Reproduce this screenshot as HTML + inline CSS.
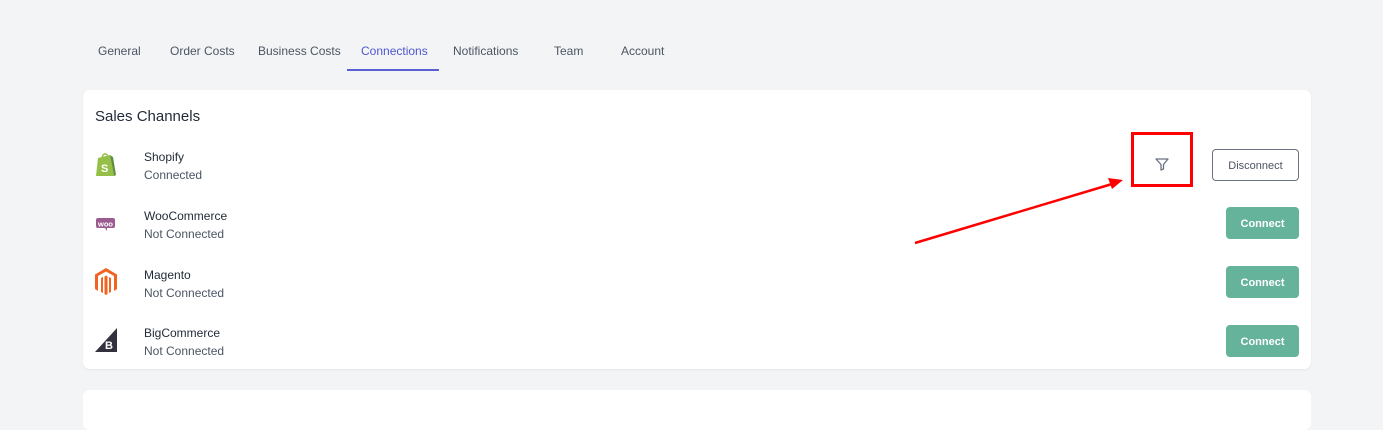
<!DOCTYPE html>
<html><head><style>
body{margin:0;width:1383px;height:407px;background:#f3f4f6;font-family:"Liberation Sans",sans-serif;position:relative;overflow:hidden}
.tab{position:absolute;top:44px;font-size:12px;color:#4b5563}
.card{position:absolute;left:83px;top:90px;width:1228px;height:279px;background:#fff;border-radius:7px;box-shadow:0 1px 2px rgba(0,0,0,.06)}
.card2{position:absolute;left:83px;top:390px;width:1228px;height:40px;background:#fff;border-radius:7px}
.name{position:absolute;left:144px;font-size:12px;color:#1f2937}
.st{position:absolute;left:144px;font-size:12px;color:#4b5563}
.btn{position:absolute;left:1226px;width:73px;height:32px;border-radius:4px;background:#65b39b;color:#fff;font-size:11px;font-weight:bold;text-align:center;line-height:35px}
</style></head><body>
<div class="tab" style="left:98px">General</div>
<div class="tab" style="left:170px">Order Costs</div>
<div class="tab" style="left:258px">Business Costs</div>
<div class="tab" style="left:361px;color:#4f56d0">Connections</div>
<div class="tab" style="left:453px">Notifications</div>
<div class="tab" style="left:554px">Team</div>
<div class="tab" style="left:621px">Account</div>
<div style="position:absolute;left:347px;top:69px;width:92px;height:2px;background:#5a5fd6"></div>
<div class="card"></div>
<div class="card2"></div>
<div style="position:absolute;left:95px;top:108px;font-size:15px;color:#1f2937">Sales Channels</div>

<svg style="position:absolute;left:95px;top:152px" width="22" height="26" viewBox="0 0 22 26"><path d="M3 6 L15 3 L19 24 L1 24 Z" fill="#95bf47"/><path d="M15 3 L19 24 L21 23 L18 5Z" fill="#5e8e3e"/><path d="M7 6 Q8 1 11 2 Q13 3 13 6" fill="none" stroke="#95bf47" stroke-width="1.5"/><text x="6" y="20" font-size="11" font-weight="bold" fill="#fff" font-family="Liberation Sans">S</text></svg>
<div class="name" style="top:150px">Shopify</div><div class="st" style="top:168px">Connected</div>

<svg style="position:absolute;left:96px;top:217px" width="20" height="14"><rect x="0" y="1" width="19" height="10" rx="2" fill="#9b5c8f"/><path d="M9 11 L11 14 L11 11Z" fill="#9b5c8f"/><text x="2" y="9.5" font-size="7.5" font-weight="bold" fill="#fff" font-family="Liberation Sans">woo</text></svg>
<div class="name" style="top:209px">WooCommerce</div><div class="st" style="top:227px">Not Connected</div>

<svg style="position:absolute;left:95px;top:268px" width="22" height="28" viewBox="0 0 22 28"><path d="M11 0 L22 6.5 V21 L19 23 V8 L11 3.5 L3 8 V23 L0 21 V6.5Z" fill="#f26322"/><path d="M9.5 8.5 L11 7.5 L12.5 8.5 V26 L11 27 L9.5 26Z" fill="#f26322"/><path d="M6 10 L8 9 V25 L6 24Z M14 9 L16 10 V24 L14 25Z" fill="#f26322"/></svg>
<div class="name" style="top:268px">Magento</div><div class="st" style="top:286px">Not Connected</div>

<svg style="position:absolute;left:95px;top:328px" width="22" height="24"><path d="M22 0 V24 H0Z" fill="#34313f"/><text x="10" y="21" font-size="11" font-weight="bold" fill="#fff" font-family="Liberation Sans">B</text></svg>
<div class="name" style="top:326px">BigCommerce</div><div class="st" style="top:344px">Not Connected</div>

<svg style="position:absolute;left:1154px;top:156px" width="16" height="16" viewBox="0 0 16 16"><path d="M2 3 H14 L9.5 8.5 V13 L7 14 V8.5Z" fill="none" stroke="#6b7280" stroke-width="1.3" stroke-linejoin="round"/></svg>
<div style="position:absolute;left:1131px;top:132px;width:56px;height:49px;border:3px solid #f00"></div>
<div style="position:absolute;left:1212px;top:149px;width:85px;height:30px;border:1px solid #6b7280;border-radius:4px;font-size:11px;color:#4b5563;text-align:center;line-height:32px">Disconnect</div>
<div class="btn" style="top:207px">Connect</div>
<div class="btn" style="top:266px">Connect</div>
<div class="btn" style="top:325px">Connect</div>
<svg style="position:absolute;left:0;top:0" width="1383" height="407"><line x1="915" y1="243" x2="1112" y2="184" stroke="#f00" stroke-width="2.5"/><path d="M1123 180 L1108 178 L1112 189Z" fill="#f00"/></svg>
</body></html>
